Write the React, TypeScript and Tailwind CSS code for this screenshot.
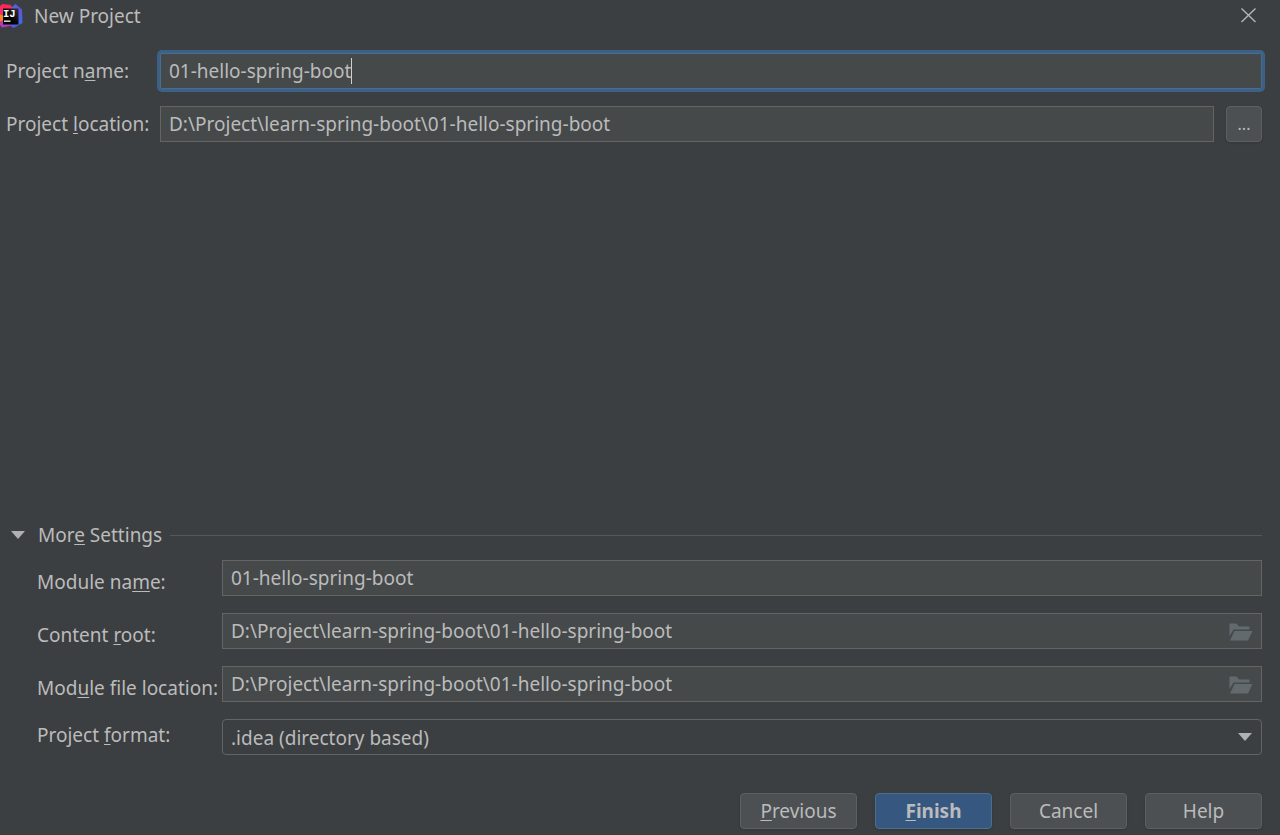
import React, { useState } from 'react';
import { clsx } from 'clsx';

const PROJECT_NAME = '01-hello-spring-boot';
const PROJECT_PATH = 'D:\\Project\\learn-spring-boot\\01-hello-spring-boot';

const Logo = () => (
  <svg width="23" height="32" viewBox="0 0 23 32" aria-hidden="true">
    <defs>
      <linearGradient id="logo-left" x1="0" y1="0" x2="0" y2="1">
        <stop offset="0" stopColor="#fe2857" />
        <stop offset="0.55" stopColor="#e8326f" />
        <stop offset="1" stopColor="#a03fd0" />
      </linearGradient>
      <linearGradient id="logo-right" x1="0" y1="0" x2="1" y2="1">
        <stop offset="0" stopColor="#2f7df0" />
        <stop offset="0.5" stopColor="#6a4fdc" />
        <stop offset="1" stopColor="#1f7cf5" />
      </linearGradient>
      <linearGradient id="logo-tile" x1="0" y1="1" x2="1" y2="0">
        <stop offset="0.4" stopColor="#000" />
        <stop offset="1" stopColor="#33333a" />
      </linearGradient>
    </defs>
    <path d="M11 8 L15.5 4 L22 9.5 L22.5 23 L13.5 28 L8 24 Z" fill="url(#logo-right)" />
    <path d="M0 6 L2.5 4 L10.5 5 L14 10 L10 26 L2 27.5 L0 25 Z" fill="url(#logo-left)" />
    <path d="M0 14.5 L3 15.5 L3 20 L0 21.5 Z" fill="#fc801d" />
    <rect x="3" y="8.5" width="15.5" height="16" fill="url(#logo-tile)" />
    <text x="3" y="17" fill="#fff" fontSize="10.5" fontWeight="700" fontFamily="Liberation Mono, monospace">
      IJ
    </text>
    <rect x="4" y="20.5" width="6.5" height="1.3" fill="#fff" />
  </svg>
);

const FolderIcon = () => (
  <svg width="24" height="18" viewBox="0 0 24 18" fill="#626a6e" aria-hidden="true">
    <path d="M0.5 0.5 H7.5 L10 3.5 H20.5 V6.5 H4.5 L0.5 13 Z" />
    <path d="M5.5 8 H23.5 L19 17.5 H1 Z" />
  </svg>
);

const Arrow = () => (
  <svg width="14" height="8" viewBox="0 0 14 8" fill="#afb1b3" aria-hidden="true">
    <path d="M0 0 H14 L7 8 Z" />
  </svg>
);

const Key = ({ children }: { children: React.ReactNode }) => (
  <span className="underline decoration-1 underline-offset-2 [text-decoration-skip-ink:none]">{children}</span>
);

interface FieldProps {
  id: string;
  value: string;
  onChange: (value: string) => void;
  focused?: boolean;
  browse?: string;
}

const Field = ({ id, value, onChange, focused, browse }: FieldProps) => (
  <div
    className={clsx(
      'relative flex h-9 min-w-0 flex-1 items-center border bg-[#45494a]',
      focused ? 'rounded-xs border-[#466d94] ring-3 ring-[#3d6185]' : 'border-[#646464]',
    )}
  >
    <input
      id={id}
      value={value}
      onChange={e => onChange(e.target.value)}
      className={clsx('h-full min-w-0 flex-1 px-2 outline-none', focused && 'caret-transparent')}
    />
    {focused && (
      <div className="pointer-events-none absolute inset-y-1 left-2 flex" aria-hidden="true">
        <span className="invisible whitespace-pre">{value}</span>
        <span className="w-px bg-[#d0d0d0]" />
      </div>
    )}
    {browse && (
      <button type="button" aria-label={browse} className="px-2 pt-[2px]">
        <FolderIcon />
      </button>
    )}
  </div>
);

interface DialogButtonProps {
  children: React.ReactNode;
  primary?: boolean;
}

const DialogButton = ({ children, primary }: DialogButtonProps) => (
  <button
    type="button"
    className={clsx(
      'h-9 w-[117px] rounded-sm border shadow-sm',
      primary ? 'border-[#4c708c] bg-[#365880] font-bold' : 'border-[#5e6060] bg-[#4c5052]',
    )}
  >
    {children}
  </button>
);

export default function App() {
  const [name, setName] = useState(PROJECT_NAME);
  const [location, setLocation] = useState(PROJECT_PATH);
  const [moduleName, setModuleName] = useState(PROJECT_NAME);
  const [contentRoot, setContentRoot] = useState(PROJECT_PATH);
  const [moduleFile, setModuleFile] = useState(PROJECT_PATH);
  const [expanded, setExpanded] = useState(true);

  return (
    <div className="flex min-h-screen flex-col bg-[#3c3f41] font-['Noto_Sans',sans-serif] text-[19px] leading-6 text-[#bbbbbb]">
      <header className="flex h-8 items-center pr-6">
        <Logo />
        <h1 className="ml-[11px] flex-1">New Project</h1>
        <button type="button" aria-label="Close">
          <svg width="16" height="16" viewBox="0 0 16 16" stroke="#b4b4b4" strokeWidth="1.4" aria-hidden="true">
            <path d="M1.5 0.5 L15.5 14 M15.5 0.5 L1.5 14" />
          </svg>
        </button>
      </header>

      <form className="flex flex-1 flex-col pt-[21px] pr-[18px] pb-[6px]" onSubmit={e => e.preventDefault()}>
        <div className="grid grid-cols-[154px_1fr] items-center gap-y-[17px] pl-[6px]">
          <label htmlFor="name">
            Project n<Key>a</Key>me:
          </label>
          <Field id="name" value={name} onChange={setName} focused />

          <label htmlFor="location">
            Project <Key>l</Key>ocation:
          </label>
          <div className="flex gap-3">
            <Field id="location" value={location} onChange={setLocation} />
            <button
              type="button"
              aria-label="Browse project location"
              className="h-9 w-9 rounded-sm border border-[#5e6060] bg-[#4c5052] text-base shadow-sm"
            >
              ...
            </button>
          </div>
        </div>

        <div className="mt-auto flex items-center pl-[11px]">
          <button
            type="button"
            aria-expanded={expanded}
            onClick={() => setExpanded(!expanded)}
            className="flex items-center gap-[13px]"
          >
            <Arrow />
            <span>
              Mor<Key>e</Key> Settings
            </span>
          </button>
          <div className="ml-2 h-px flex-1 bg-[#555758]" />
        </div>

        {expanded && (
          <div className="mt-[13px] grid grid-cols-[185px_1fr] items-center gap-y-[17px] pl-[37px]">
            <label htmlFor="module-name" className="pt-2">
              Module na<Key>m</Key>e:
            </label>
            <Field id="module-name" value={moduleName} onChange={setModuleName} />

            <label htmlFor="content-root" className="pt-2">
              Content <Key>r</Key>oot:
            </label>
            <Field id="content-root" value={contentRoot} onChange={setContentRoot} browse="Browse content root" />

            <label htmlFor="module-file" className="pt-2 whitespace-nowrap">
              Mod<Key>u</Key>le file location:
            </label>
            <Field id="module-file" value={moduleFile} onChange={setModuleFile} browse="Browse module file location" />

            <label htmlFor="format" className="pb-1">
              Project <Key>f</Key>ormat:
            </label>
            <div className="relative h-9">
              <select
                id="format"
                className="h-full w-full appearance-none rounded-sm border border-[#646464] bg-[#3c3f41] px-2 pt-[2px] outline-none"
              >
                <option>.idea (directory based)</option>
                <option>.ipr (file based)</option>
              </select>
              <span className="pointer-events-none absolute inset-y-0 right-[10px] flex items-center">
                <Arrow />
              </span>
            </div>
          </div>
        )}

        <footer className="mt-[38px] flex justify-end gap-[18px]">
          <DialogButton>
            <Key>P</Key>revious
          </DialogButton>
          <DialogButton primary>
            <Key>F</Key>inish
          </DialogButton>
          <DialogButton>Cancel</DialogButton>
          <DialogButton>Help</DialogButton>
        </footer>
      </form>
    </div>
  );
}
